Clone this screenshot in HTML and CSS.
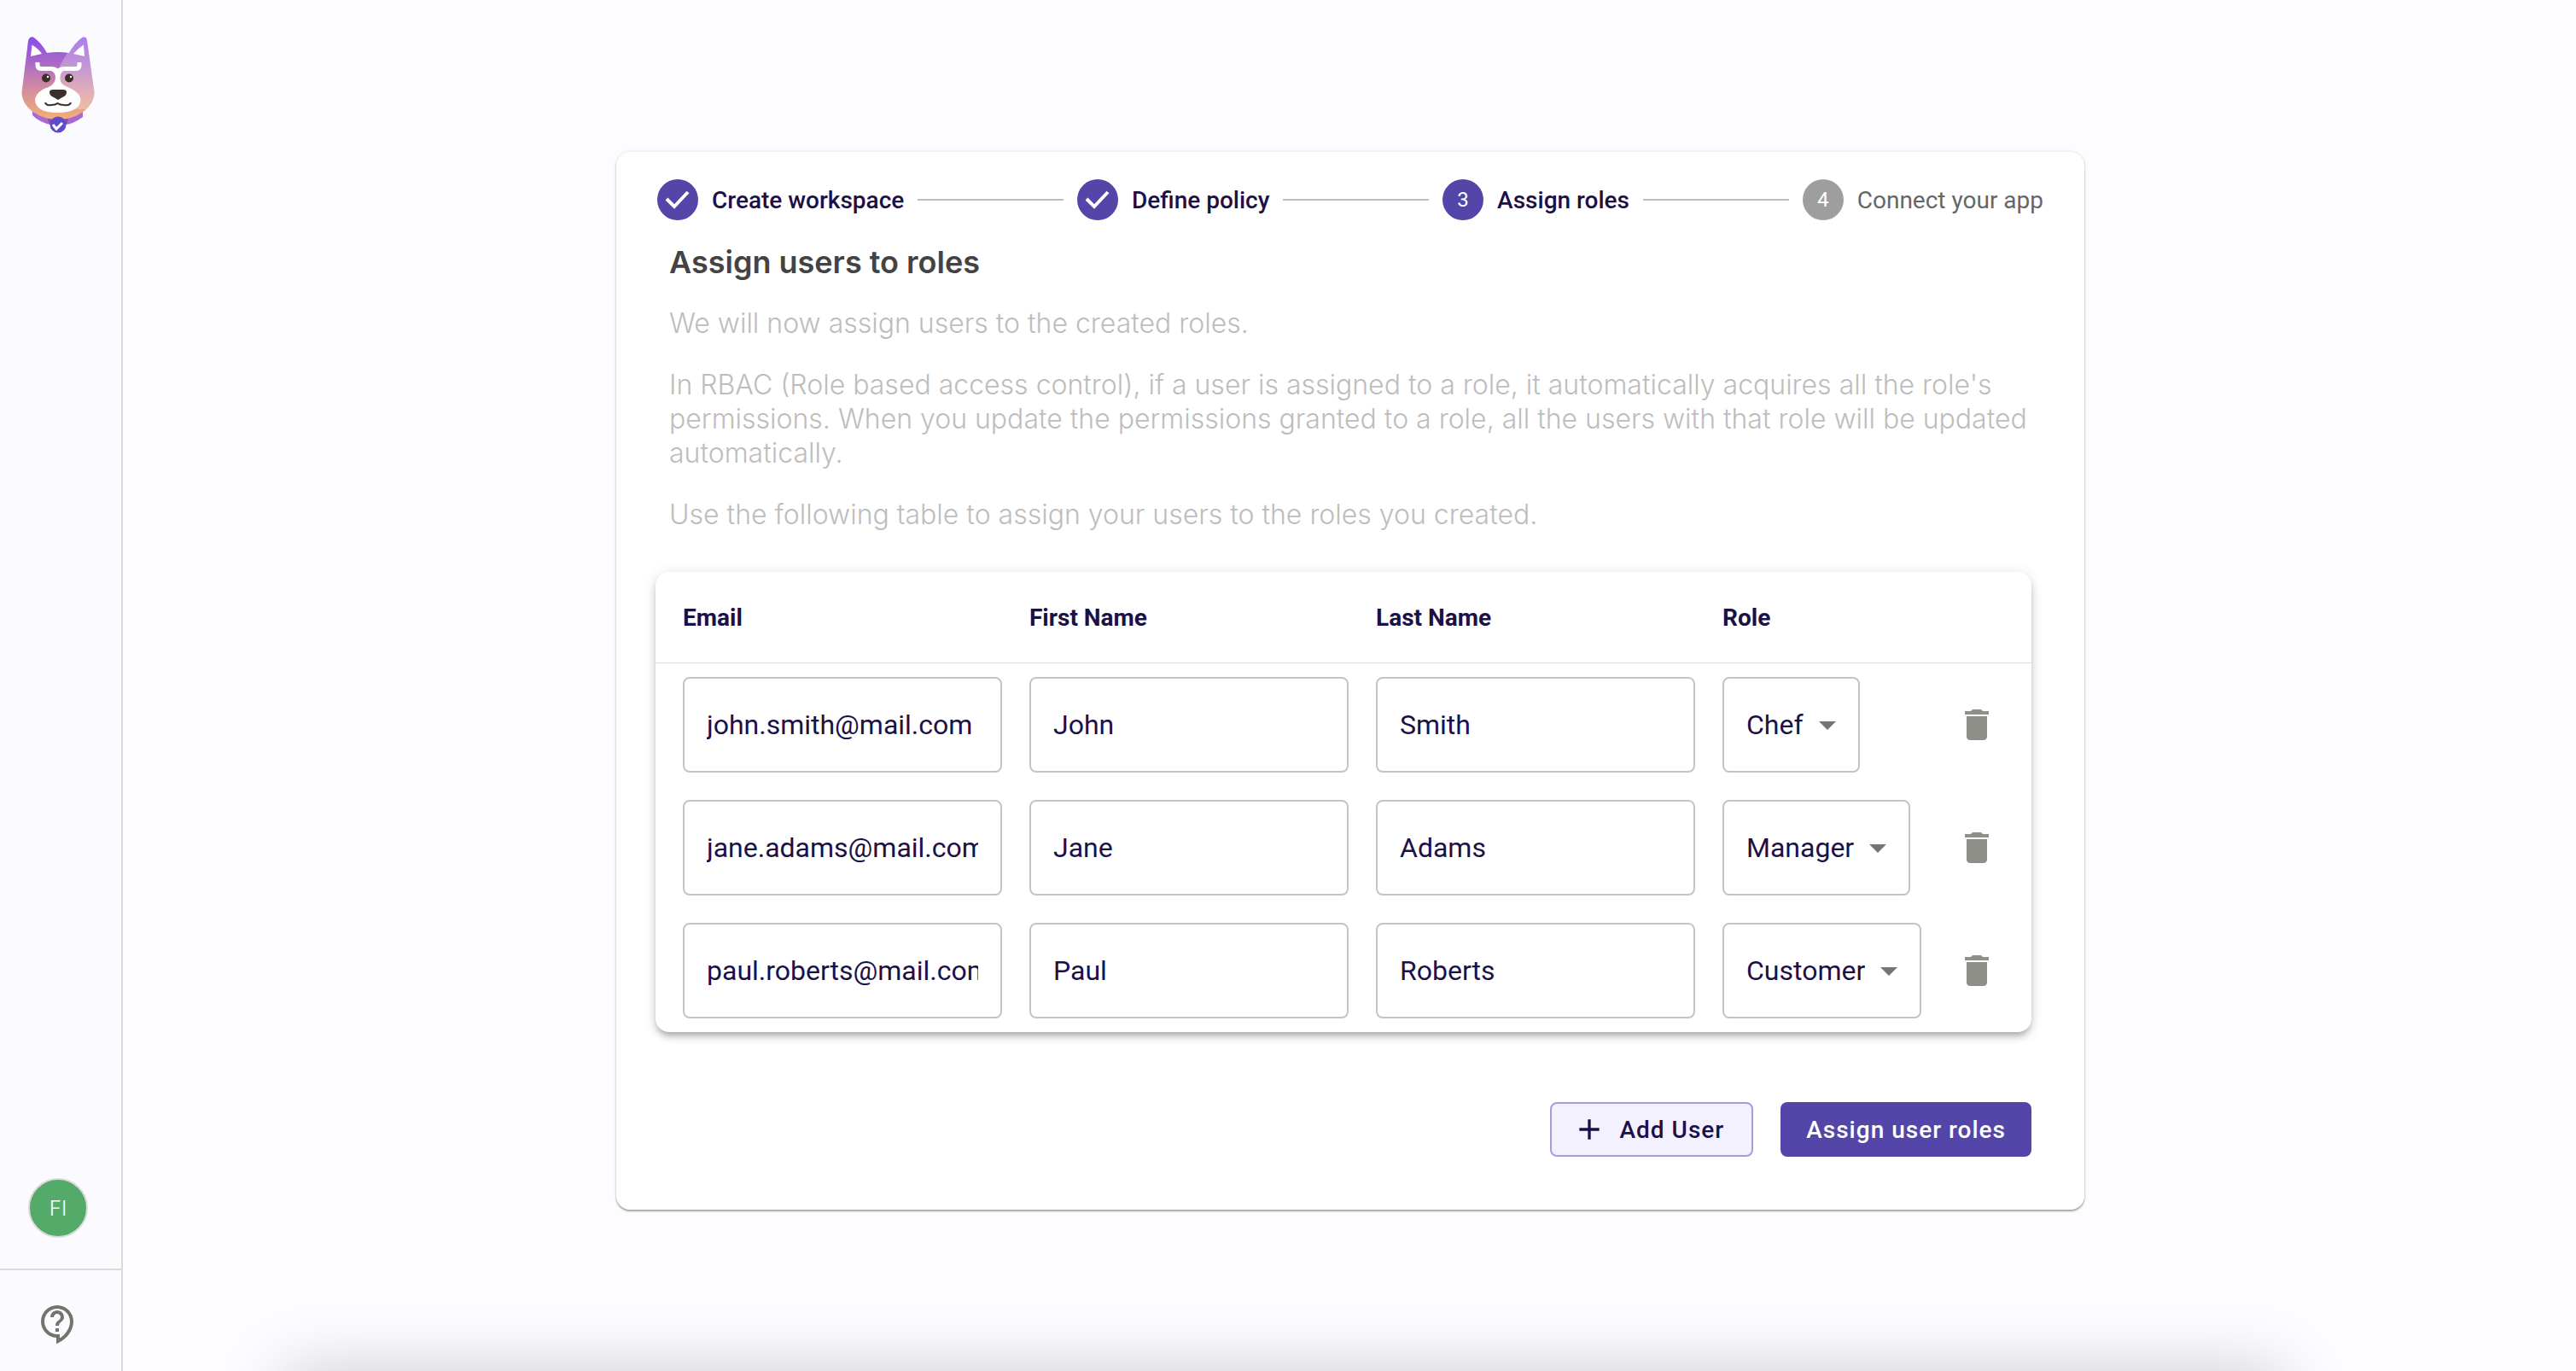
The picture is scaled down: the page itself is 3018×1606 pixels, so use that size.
FILE: index.html
```html
<!DOCTYPE html>
<html lang="en">
<head>
<meta charset="utf-8">
<title>Assign users to roles</title>
<link rel="stylesheet" href="styles.css">
</head>
<body>
<div class="app">
  <aside class="sidebar">
    <a class="logo" href="#" aria-label="Home">
      <svg viewBox="0 0 86 114" width="86" height="114" aria-hidden="true">
        <defs>
          <linearGradient id="fur" x1="0" y1="0" x2="0" y2="1">
            <stop offset="0" stop-color="#8a4bec"/>
            <stop offset="0.3" stop-color="#a868c8"/>
            <stop offset="0.65" stop-color="#d58f9c"/>
            <stop offset="1" stop-color="#f3b074"/>
          </linearGradient>
          <clipPath id="head"><path d="M8 5C9 0 13 -1 16 2Q24 8 30 19Q43 17 56 19Q62 8 70 2C74 -1 77 1 77 5L85.500 65C85.500 84 64 97 43 97S.5 84 .5 65Z"/></clipPath>
        </defs>
        <path d="M13 83H72V94Q60 103 50 103H35Q22 101 13 92Z" fill="#a968d6"/>
        <path d="M31 97C33 93 53 93 55 97L53 103H33Z" fill="#8a4db8"/>
        <g clip-path="url(#head)">
          <path d="M0 0H86V98H0Z" fill="url(#fur)"/>
          <path d="M74 -2Q54 12 43 40V60L58 85H86V-2Z" fill="#fff" opacity=".28"/>
        </g>
        <path d="M12.500 9.500Q20 14 24 20L11 23Z" fill="#fff"/>
        <path d="M73 9.500Q66 14 61 20L74 23Z" fill="#fff"/>
        <path d="M19 30V33Q19 37.500 23 37.500H35Q42 37.500 42 43M68 30V33Q68 37.500 64 37.500H51Q43 37.500 43 43" fill="none" stroke="#fff" stroke-width="5"/>
        <path d="M35 40Q43 36 49 40Q45 43 45.500 50Q46 56 54 59Q69 65 69.500 74Q68 89 42.500 89Q17 89 16 74Q17 64 32 59Q40 55 40 48Q40 42 35 40Z" fill="#fff"/>
        <circle cx="29" cy="48.500" r="5" fill="#3a3029"/>
        <circle cx="56" cy="48.500" r="5" fill="#3a3029"/>
        <circle cx="31" cy="47" r="1.200" fill="#fff"/>
        <circle cx="58" cy="47" r="1.200" fill="#fff"/>
        <path d="M33 65Q33 62 37 62H49Q53 62 53 65Q53 69 48 71L43 74L38 71Q33 69 33 65Z" fill="#3a3029"/>
        <path d="M28 77Q29 81 35 80Q40 80 42.500 78Q45 80 50 80Q57 81 58 77" fill="none" stroke="#3a3029" stroke-width="2"/>
        <circle cx="43" cy="103" r="9.500" fill="#5e4bcb"/>
        <path d="M37 103L41 108L48 101" fill="none" stroke="#fff" stroke-width="3"/>
      </svg>
    </a>
    <button class="avatar" type="button">FI</button>
    <a class="help" href="#" aria-label="Help">
      <svg viewBox="0 0 24 24" width="48" height="48" aria-hidden="true"><path fill="currentColor" d="M11 23.590v-3.600c-5.010-.26-9-4.420-9-9.490C2 5.260 6.260 1 11.500 1S21 5.260 21 10.500c0 4.950-3.440 9.930-8.570 12.400l-1.430.69zM11.500 3C7.360 3 4 6.360 4 10.500S7.360 18 11.500 18H13v2.300c3.640-2.300 6-6.080 6-9.800C19 6.360 15.640 3 11.500 3zm-1 11.500h2v2h-2zm2-1.500h-2c0-3.250 3-3 3-5 0-1.100-.9-2-2-2s-2 .9-2 2h-2c0-2.210 1.790-4 4-4s4 1.790 4 4c0 2.500-3 2.750-3 5z"/></svg>
    </a>
  </aside>

  <main class="main">
    <section class="card">
      <ol class="stepper">
        <li class="step"><span class="step-dot"><svg viewBox="0 0 48 48" width="48" height="48" aria-hidden="true"><path d="M11 23L20 32L36 15" fill="none" stroke="#fff" stroke-width="4"/></svg></span>Create workspace</li>
        <li class="line" aria-hidden="true"></li>
        <li class="step"><span class="step-dot"><svg viewBox="0 0 48 48" width="48" height="48" aria-hidden="true"><path d="M11 23L20 32L36 15" fill="none" stroke="#fff" stroke-width="4"/></svg></span>Define policy</li>
        <li class="line" aria-hidden="true"></li>
        <li class="step" aria-current="step"><span class="step-dot">3</span>Assign roles</li>
        <li class="line" aria-hidden="true"></li>
        <li class="step step-pending"><span class="step-dot">4</span>Connect your app</li>
      </ol>

      <div class="intro">
        <h1>Assign users to roles</h1>
        <p>We will now assign users to the created roles.</p>
        <p>In RBAC (Role based access control), if a user is assigned to a role, it automatically acquires all the role's permissions. When you update the permissions granted to a role, all the users with that role will be updated automatically.</p>
        <p>Use the following table to assign your users to the roles you created.</p>
      </div>

      <div class="table-wrap">
        <table class="users">
          <colgroup><col class="col-text"><col class="col-text"><col class="col-text"><col><col class="col-action"></colgroup>
          <thead>
            <tr><th scope="col">Email</th><th scope="col">First Name</th><th scope="col">Last Name</th><th scope="col">Role</th><td></td></tr>
          </thead>
          <tbody>
            <tr>
              <td><input class="field" type="text" aria-label="Email" value="john.smith@mail.com"></td>
              <td><input class="field" type="text" aria-label="First name" value="John"></td>
              <td><input class="field" type="text" aria-label="Last name" value="Smith"></td>
              <td><select class="role" aria-label="Role"><option selected>Chef</option><option>Manager</option><option>Customer</option></select></td>
              <td><button class="delete" type="button" aria-label="Delete John Smith"><svg viewBox="0 0 24 24" width="48" height="48"><path fill="currentColor" d="M6 19c0 1.100.9 2 2 2h8c1.100 0 2-.9 2-2V7H6v12zM19 4h-3.500l-1-1h-5l-1 1H5v2h14V4z"/></svg></button></td>
            </tr>
            <tr>
              <td><input class="field" type="text" aria-label="Email" value="jane.adams@mail.com"></td>
              <td><input class="field" type="text" aria-label="First name" value="Jane"></td>
              <td><input class="field" type="text" aria-label="Last name" value="Adams"></td>
              <td><select class="role" aria-label="Role"><option>Chef</option><option selected>Manager</option><option>Customer</option></select></td>
              <td><button class="delete" type="button" aria-label="Delete Jane Adams"><svg viewBox="0 0 24 24" width="48" height="48"><path fill="currentColor" d="M6 19c0 1.100.9 2 2 2h8c1.100 0 2-.9 2-2V7H6v12zM19 4h-3.500l-1-1h-5l-1 1H5v2h14V4z"/></svg></button></td>
            </tr>
            <tr>
              <td><input class="field" type="text" aria-label="Email" value="paul.roberts@mail.com"></td>
              <td><input class="field" type="text" aria-label="First name" value="Paul"></td>
              <td><input class="field" type="text" aria-label="Last name" value="Roberts"></td>
              <td><select class="role" aria-label="Role"><option>Chef</option><option>Manager</option><option selected>Customer</option></select></td>
              <td><button class="delete" type="button" aria-label="Delete Paul Roberts"><svg viewBox="0 0 24 24" width="48" height="48"><path fill="currentColor" d="M6 19c0 1.100.9 2 2 2h8c1.100 0 2-.9 2-2V7H6v12zM19 4h-3.500l-1-1h-5l-1 1H5v2h14V4z"/></svg></button></td>
            </tr>
          </tbody>
        </table>
      </div>

      <div class="actions">
        <button class="btn btn-outline" type="button"><svg viewBox="0 0 24 24" width="40" height="40" aria-hidden="true"><path fill="currentColor" d="M19 13h-6v6h-2v-6H5v-2h6V5h2v6h6v2z"/></svg>Add User</button>
        <button class="btn btn-primary" type="button">Assign user roles</button>
      </div>
    </section>
  </main>
</div>
<div class="drawer-shadow" aria-hidden="true"></div>
</body>
</html>
```
FILE: styles.css
```css
* {
  box-sizing: border-box;
}

body {
  margin: 0;
  background: #fdfdff;
  color: #1b1148;
  font-family: Roboto, "Liberation Sans", sans-serif;
  font-size: 28px;
}

button,
input,
select {
  font-family: inherit;
  color: inherit;
}

.app {
  display: grid;
  grid-template-columns: 144px minmax(0, 1fr);
  min-height: 100vh;
}

/* Sidebar */
.sidebar {
  display: flex;
  flex-direction: column;
  align-items: center;
  padding-top: 43px;
  padding-right: 6px;
  background: #fbfaff;
  border-right: 2px solid #dbdbd6;
}

.logo,
.logo svg {
  display: block;
}

.avatar {
  width: 70px;
  height: 70px;
  margin-top: auto;
  margin-bottom: 36px;
  padding: 0;
  border: 2px solid #dbdbdb;
  border-radius: 50%;
  background: #54ab69;
  color: #fff;
  font-family: Inter, "Open Sans", sans-serif;
  font-size: 24px;
  font-weight: 300;
}

.help {
  display: flex;
  align-items: center;
  justify-content: center;
  align-self: stretch;
  height: 120px;
  margin-right: -6px;
  padding-top: 8px;
  padding-right: 6px;
  border-top: 2px solid #dbdbd6;
  color: #74746c;
}

/* Card */
.main {
  display: flex;
  justify-content: center;
  align-items: flex-start;
  padding: 178px 46px 48px 48px;
}

.card {
  width: 100%;
  max-width: 1720px;
  padding: 32px 48px 62px;
  border-radius: 16px;
  background: #fff;
  box-shadow: 0 2px 2px rgba(0, 0, 0, 0.32), 0 0 4px rgba(0, 0, 0, 0.12);
}

/* Stepper */
.stepper {
  display: flex;
  align-items: center;
  gap: 16px;
  margin: 0;
  padding: 0;
  list-style: none;
}

.step {
  display: flex;
  align-items: center;
  gap: 16px;
  font-weight: 500;
  white-space: nowrap;
}

.step-dot {
  display: flex;
  align-items: center;
  justify-content: center;
  width: 48px;
  height: 48px;
  border-radius: 50%;
  background: #5446a9;
  color: #fff;
  font-size: 24px;
  font-weight: 400;
}

.step-pending {
  color: #666;
  font-weight: 400;
}

.step-pending .step-dot {
  background: #9e9e9e;
}

.line {
  flex: 1;
  height: 2px;
  background: #bdbdbd;
}

/* Intro text */
.intro {
  padding: 24px 14px 0;
  color: #bdbdbd;
  font-family: Inter, "Open Sans", sans-serif;
  font-size: 32px;
  font-weight: 300;
  line-height: 40px;
}

.intro h1 {
  margin: 0 0 27px;
  color: #434343;
  font-size: 36px;
  font-weight: 600;
  line-height: 50px;
}

.intro p {
  margin: 0 0 32px;
}

/* Users table */
.table-wrap {
  margin: 47px 14px 0 -2px;
  border-radius: 16px;
  background: #fff;
  box-shadow: 0 6px 6px -4px rgba(0, 0, 0, 0.2), 0 6px 8px rgba(0, 0, 0, 0.14), 0 2px 16px rgba(0, 0, 0, 0.12);
}

.users {
  width: 100%;
  border-collapse: separate;
  border-spacing: 0;
  table-layout: fixed;
}

.col-text {
  width: 406px;
}

.col-action {
  width: 120px;
}

.users th,
.users thead td {
  height: 107px;
  padding: 0 0 0 32px;
  border-bottom: 1px solid #dcdcdc;
  font-weight: 700;
  text-align: left;
}

.users tbody td {
  padding: 16px 0 16px 32px;
}

.field,
.role {
  display: block;
  height: 112px;
  border: 2px solid #c4c4c4;
  border-radius: 8px;
  background-color: #fff;
  font-size: 32px;
}

.field {
  width: 100%;
  padding: 0 26px;
}

.role {
  appearance: none;
  field-sizing: content;
  padding: 0 64px 0 26px;
  background-image: url("data:image/svg+xml,%3Csvg xmlns='http://www.w3.org/2000/svg' viewBox='0 0 24 24' width='48' height='48'%3E%3Cpath fill='%23757575' d='M7 10l5 5 5-5z'/%3E%3C/svg%3E");
  background-position: right 12px center;
  background-repeat: no-repeat;
}

.delete {
  display: block;
  padding: 0;
  border: 0;
  background: none;
  color: #8f8f8a;
}

.delete svg {
  display: block;
}

/* Actions */
.actions {
  display: flex;
  justify-content: flex-end;
  gap: 32px;
  margin: 82px 14px 0 0;
}

.btn {
  display: flex;
  align-items: center;
  height: 64px;
  padding: 0 30px;
  border: 0;
  border-radius: 8px;
  font-size: 28px;
  font-weight: 500;
  letter-spacing: 1px;
}

.btn-outline {
  gap: 16px;
  padding: 0 32px 0 24px;
  border: 2px solid #a79be0;
  background: #f4f1ff;
}

.btn-primary {
  background: #5446a9;
  color: #fff;
}

.drawer-shadow {
  position: fixed;
  right: 343px;
  bottom: -80px;
  left: 332px;
  height: 80px;
  box-shadow: 0 0 80px rgba(0, 0, 0, 0.2);
}
```
